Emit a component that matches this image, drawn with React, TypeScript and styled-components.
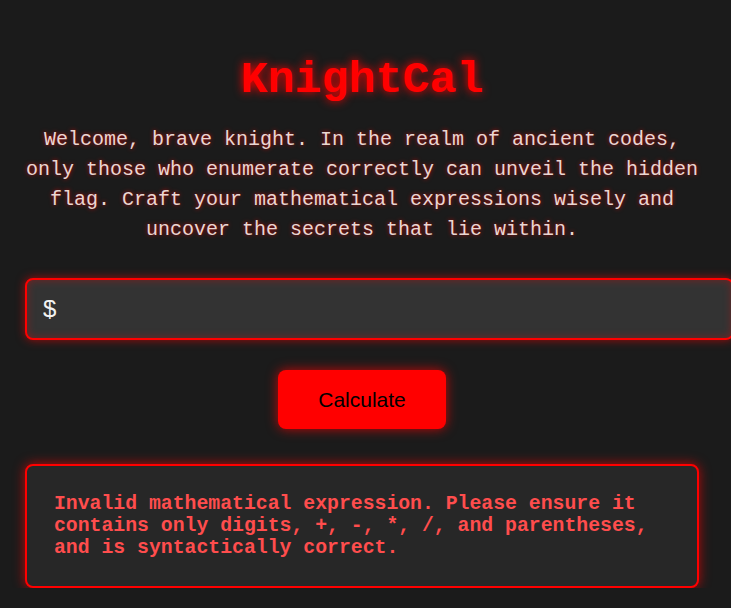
import React, { useState } from "react";
import styled, { createGlobalStyle } from "styled-components";

const Global = createGlobalStyle`
  html, body {
    margin: 0;
    padding: 0;
    background: #1b1b1b;
    overflow: hidden;
  }
  body {
    font-family: "Courier New", "Liberation Mono", monospace;
    color: #e6d6d2;
  }
`;

const Container = styled.div`
  width: 674px;
  padding: 55px 0 0 25px;
  display: flex;
  flex-direction: column;
  align-items: stretch;
`;

const Title = styled.h1`
  margin: 0 0 18px;
  text-align: center;
  font-family: "Courier New", "Liberation Mono", monospace;
  font-weight: bold;
  font-size: 45px;
  line-height: 52px;
  color: #ff0000;
  text-shadow: 0 0 10px #ff0000;
`;

const Intro = styled.p`
  margin: 0 0 33px;
  text-align: center;
  font-size: 20px;
  line-height: 30px;
  color: #ead6d2;
  text-shadow: 0 0 4px rgba(255, 0, 0, 0.7);
`;

const Input = styled.input`
  width: 674px;
  padding: 15px 15px 15px 16px;
  font-family: "Liberation Sans", Arial, sans-serif;
  font-size: 24px;
  line-height: 28px;
  height: 28px;
  color: #f2f2f2;
  background: #333333;
  border: 2px solid #ff0000;
  border-radius: 8px;
  box-shadow: 0 0 10px rgba(255, 0, 0, 0.6), inset 0 0 8px rgba(255, 0, 0, 0.35);
  outline: none;
  caret-color: #ffffff;
`;

const ButtonRow = styled.div`
  display: flex;
  justify-content: center;
  margin-top: 30px;
`;

const Button = styled.button`
  width: 168px;
  height: 59px;
  font-family: "Liberation Sans", Arial, sans-serif;
  font-size: 21px;
  color: #000;
  background: #ff0000;
  border: none;
  border-radius: 8px;
  box-shadow: 0 0 12px rgba(255, 0, 0, 0.75);
  cursor: pointer;
`;

const ErrorBox = styled.div`
  margin-top: 35px;
  box-sizing: border-box;
  width: 674px;
  height: 124px;
  padding: 27px 27px;
  background: #272727;
  border: 2px solid #ff0000;
  border-radius: 8px;
  box-shadow: 0 0 12px rgba(255, 0, 0, 0.7);
`;

const ErrorText = styled.p`
  margin: 0;
  font-family: "Courier New", "Liberation Mono", monospace;
  font-weight: bold;
  font-size: 19.8px;
  line-height: 22px;
  color: #ff4d4d;
`;

export default function App() {
  const [value, setValue] = useState("$");
  return (
    <>
      <Global />
      <Container>
        <Title>KnightCal</Title>
        <Intro>
          Welcome, brave knight. In the realm of ancient codes, only those who
          enumerate correctly can unveil the hidden flag. Craft your
          mathematical expressions wisely and uncover the secrets that lie
          within.
        </Intro>
        <Input value={value} onChange={(e) => setValue(e.target.value)} />
        <ButtonRow>
          <Button>Calculate</Button>
        </ButtonRow>
        <ErrorBox>
          <ErrorText>
            Invalid mathematical expression. Please ensure it contains only
            digits, +, -, *, /, and parentheses, and is syntactically correct.
          </ErrorText>
        </ErrorBox>
      </Container>
    </>
  );
}
